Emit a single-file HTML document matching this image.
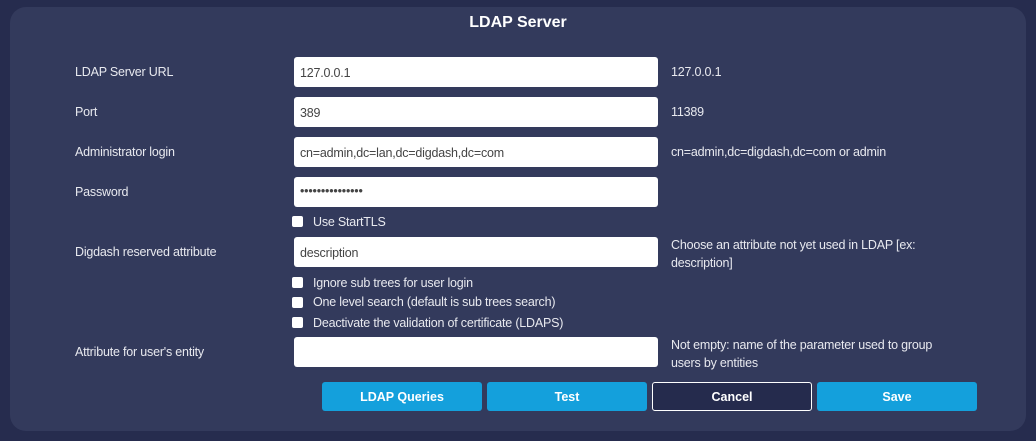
<!DOCTYPE html>
<html><head><style>
body{margin:0;width:1036px;height:441px;background:#262c4e;font-family:"Liberation Sans",sans-serif;font-size:12.5px;color:#e8e9ef;overflow:hidden;position:relative}
.panel{position:absolute;left:10px;top:7px;width:1016px;height:424px;background:#333a5c;border-radius:16px}
.t{position:absolute;white-space:nowrap;letter-spacing:-0.2px}
h1{position:absolute;left:0;width:1036px;top:14px;margin:0;text-align:center;font-size:16px;font-weight:bold;color:#fff}
.in{position:absolute;left:294px;width:364px;height:30px;background:#fff;border-radius:3px;color:#444;box-sizing:border-box;padding:9px 6px;font-size:12.5px;letter-spacing:-0.2px}
.cb{position:absolute;left:292px;width:11px;height:11px;background:#fff;border-radius:2px}
.btn{position:absolute;top:382px;width:160px;height:29px;background:#14a0dc;border-radius:3px;color:#fff;font-weight:bold;text-align:center;line-height:30px;box-sizing:border-box}
</style></head><body>
<div class="panel"></div>
<h1>LDAP Server</h1>
<div class="t" style="left:75px;top:65px">LDAP Server URL</div>
<div class="in" style="top:57px">127.0.0.1</div>
<div class="t" style="left:671px;top:65px">127.0.0.1</div>
<div class="t" style="left:75px;top:105px">Port</div>
<div class="in" style="top:97px">389</div>
<div class="t" style="left:671px;top:105px">11389</div>
<div class="t" style="left:75px;top:145px">Administrator login</div>
<div class="in" style="top:137px">cn=admin,dc=lan,dc=digdash,dc=com</div>
<div class="t" style="left:671px;top:145px">cn=admin,dc=digdash,dc=com or admin</div>
<div class="t" style="left:75px;top:185px">Password</div>
<div class="in" style="top:177px;padding-top:7px">•••••••••••••••</div>
<div class="cb" style="top:216px"></div><div class="t" style="left:313px;top:215px">Use StartTLS</div>
<div class="t" style="left:75px;top:245px">Digdash reserved attribute</div>
<div class="in" style="top:237px">description</div>
<div class="t" style="left:671px;top:236px;line-height:18px">Choose an attribute not yet used in LDAP [ex:<br>description]</div>
<div class="cb" style="top:277px"></div><div class="t" style="left:313px;top:276px">Ignore sub trees for user login</div>
<div class="cb" style="top:297px"></div><div class="t" style="left:313px;top:295px">One level search (default is sub trees search)</div>
<div class="cb" style="top:317px"></div><div class="t" style="left:313px;top:316px">Deactivate the validation of certificate (LDAPS)</div>
<div class="t" style="left:75px;top:345px">Attribute for user's entity</div>
<div class="in" style="top:337px"></div>
<div class="t" style="left:671px;top:336px;line-height:18px">Not empty: name of the parameter used to group<br>users by entities</div>
<div class="btn" style="left:322px">LDAP Queries</div>
<div class="btn" style="left:487px">Test</div>
<div class="btn" style="left:652px;background:#252b4d;border:1px solid #fff;line-height:28px">Cancel</div>
<div class="btn" style="left:817px">Save</div>
</body></html>
